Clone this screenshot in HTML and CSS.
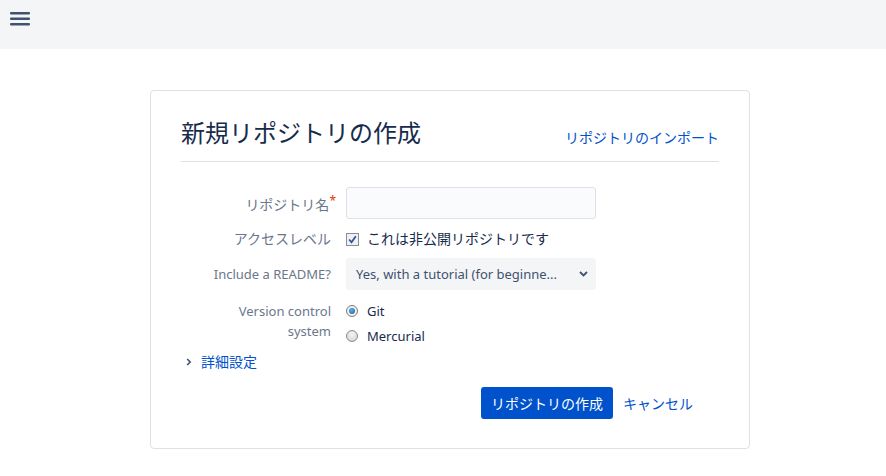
FILE: index.html
```html
<!DOCTYPE html>
<html lang="ja">
<head>
<meta charset="utf-8">
<link rel="stylesheet" href="styles.css">
</head>
<body>
<header class="topbar">
  <svg class="menu" width="20" height="14" viewBox="0 0 20 14"><rect x="0" y="0" width="20" height="2.6" rx="1" fill="#42526e"/><rect x="0" y="5.5" width="20" height="2.6" rx="1" fill="#42526e"/><rect x="0" y="11" width="20" height="2.6" rx="1" fill="#42526e"/></svg>
</header>
<main class="card">
  <div class="card-head">
    <h1 class="title">新規リポジトリの作成</h1>
    <a class="link import" href="#">リポジトリのインポート</a>
  </div>
  <div class="row row-input">
    <label class="label">リポジトリ名<span class="req">*</span></label>
    <div class="field"><input class="text" type="text"></div>
  </div>
  <div class="row row-check">
    <label class="label">アクセスレベル</label>
    <div class="field check">
      <span class="box"><svg width="11" height="11" viewBox="0 0 11 11"><path d="M2.2 5.5 L4.5 8.3 L8.8 2.2" fill="none" stroke="#2d4f9e" stroke-width="1.7"/></svg></span>
      <span class="check-text">これは非公開リポジトリです</span>
    </div>
  </div>
  <div class="row row-select">
    <label class="label">Include a README?</label>
    <div class="field">
      <div class="select"><span>Yes, with a tutorial (for beginne...</span>
        <svg width="9" height="6" viewBox="0 0 9 6"><path d="M1 1 L4.5 4.5 L8 1" fill="none" stroke="#42526e" stroke-width="1.8"/></svg>
      </div>
    </div>
  </div>
  <div class="row row-radio">
    <label class="label latin">Version control<br>system</label>
    <div class="field radios">
      <div class="radio-line"><span class="radio on"><span class="dot"></span></span><span>Git</span></div>
      <div class="radio-line"><span class="radio"></span><span>Mercurial</span></div>
    </div>
  </div>
  <div class="advanced">
    <svg width="6" height="8" viewBox="0 0 6 8"><path d="M1.2 1 L4.2 4 L1.2 7" fill="none" stroke="#42526e" stroke-width="1.6"/></svg>
    <a class="link" href="#">詳細設定</a>
  </div>
  <div class="actions">
    <button class="btn">リポジトリの作成</button>
    <a class="link cancel" href="#">キャンセル</a>
  </div>
</main>
</body>
</html>
```
FILE: styles.css
```css
html, body { margin: 0; padding: 0; background: #fff; }
body {
  font-family: "Noto Sans", "Noto Sans CJK JP", sans-serif;
  font-size: 14px;
  color: #172b4d;
}
.topbar {
  height: 49px;
  background: #f4f5f7;
  display: flex;
  align-items: flex-start;
}
.menu { margin: 12px 0 0 10px; }
.card {
  box-sizing: border-box;
  width: 600px;
  margin: 41px 0 0 150px;
  border: 1px solid #dfe1e6;
  border-radius: 4px;
  padding: 0 30px 29px 30px;
}
.card-head {
  display: flex;
  align-items: flex-end;
  justify-content: space-between;
  border-bottom: 1px solid #dfe1e6;
  padding: 27px 0 13px;
}
.title {
  margin: 0;
  font-weight: 400;
  font-size: 24px;
  line-height: 30px;
  color: #172b4d;
}
.link { color: #0052cc; text-decoration: none; }
.import { font-size: 14px; line-height: 20px; margin-bottom: 0; }
.row { display: flex; align-items: center; }
.label {
  width: 150px;
  text-align: right;
  color: #6b778c;
  font-size: 14px;
  line-height: 20px;
  flex: none;
}
.label.latin { font-size: 13px; }
.row-select .label { font-size: 13px; }
.req { color: #de350b; font-size: 12px; vertical-align: 5px; margin-right: -5px; }
.field { margin-left: 15px; width: 250px; }
.row-input { margin-top: 25px; }
.text {
  box-sizing: border-box;
  width: 250px;
  height: 32px;
  background: #fafbfc;
  border: 1px solid #dfe1e6;
  border-radius: 3px;
  display: block;
}
.row-check { margin-top: 10px; }
.check { display: flex; align-items: center; width: auto; font-size: 14px; line-height: 20px; }
.box {
  box-sizing: border-box;
  width: 13px; height: 13px;
  border: 1px solid #8c8c8c;
  background: #eef0f3;
  display: flex; align-items: center; justify-content: center;
  margin-right: 8px;
}
.box svg { display: block; }
.row-select { margin-top: 9px; }
.select {
  box-sizing: border-box;
  width: 250px;
  height: 32px;
  background: #f4f5f7;
  border-radius: 3px;
  display: flex;
  align-items: center;
  justify-content: space-between;
  padding: 0 8px 0 10px;
  color: #42526e;
  font-size: 13px;
}
.row-radio { margin-top: 11px; align-items: flex-start; }
.radios { display: flex; flex-direction: column; }
.radio-line { display: flex; align-items: center; height: 20px; margin-bottom: 5px; font-size: 13px; }
.radio {
  box-sizing: border-box;
  width: 12px; height: 12px;
  border-radius: 50%;
  border: 1px solid #8c8c8c;
  background: radial-gradient(circle at 50% 35%, #f4f4f4, #cfcfcf);
  margin-right: 9px;
  display: flex; align-items: center; justify-content: center;
}
.radio.on { border-color: #7a7a7a; background: #f0f0f0; }
.dot { width: 6px; height: 6px; border-radius: 50%; background: radial-gradient(circle at 40% 35%, #5ab0ea, #1b5d99); }
.advanced {
  display: flex; align-items: center;
  margin-top: 1px;
  margin-left: 5px;
  font-size: 14px;
  line-height: 20px;
}
.advanced svg { margin-right: 9px; }
.actions {
  display: flex; align-items: center;
  margin-top: 15px;
  padding-left: 300px;
}
.btn {
  background: #0052cc;
  color: #fff;
  border: 0;
  border-radius: 3px;
  height: 32px;
  padding: 0 10px;
  font-family: inherit;
  font-size: 14px;
  width: 132px;
}
.cancel { margin-left: 10px; font-size: 14px; }
```
